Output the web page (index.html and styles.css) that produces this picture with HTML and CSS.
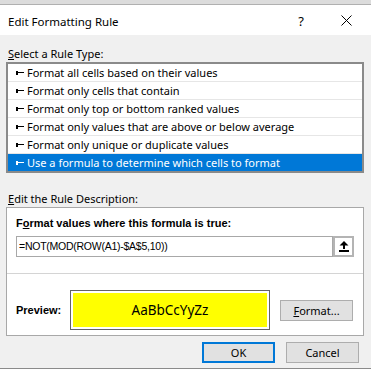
FILE: index.html
```html
<!DOCTYPE html>
<html lang="en">
<head>
  <meta charset="utf-8" />
  <title>Edit Formatting Rule</title>
  <link rel="stylesheet" href="styles.css">
</head>
<body>
  <div class="window">
    <div class="topstrip"></div>

    <div class="titlebar">
      <span class="title">Edit Formatting Rule</span>
      <span class="help">?</span>
      <svg class="close" width="11" height="11" viewBox="0 0 11 11">
        <path d="M0.5 0.5 L10.5 10.5 M10.5 0.5 L0.5 10.5" stroke="#000" stroke-width="1" fill="none"/>
      </svg>
    </div>

    <div class="dialog">
      <div class="label"><u>S</u>elect a Rule Type:</div>

      <div class="listbox">
        <div class="row"><span class="mark"></span>Format all cells based on their values</div>
        <div class="row"><span class="mark"></span>Format only cells that contain</div>
        <div class="row"><span class="mark"></span>Format only top or bottom ranked values</div>
        <div class="row"><span class="mark"></span>Format only values that are above or below average</div>
        <div class="row"><span class="mark"></span>Format only unique or duplicate values</div>
        <div class="row selected"><span class="mark"></span>Use a formula to determine which cells to format</div>
      </div>

      <div class="label second"><u>E</u>dit the Rule Description:</div>

      <div class="panel">
        <div class="formula-block">
          <div class="strong">F<u>o</u>rmat values where this formula is true:</div>
          <div class="formula-row">
            <div class="formula">=NOT(MOD(ROW(A1)-$A$5,10))</div>
            <div class="collapse">
              <svg width="10" height="11" viewBox="0 0 10 11">
                <path d="M5 0 L9.5 4.5 L6 4.5 L6 8 L4 8 L4 4.5 L0.5 4.5 Z" fill="#000"/>
                <rect x="0" y="9" width="10" height="2" fill="#000"/>
              </svg>
            </div>
          </div>
        </div>

        <div class="preview-row">
          <span class="strong">Preview:</span>
          <div class="preview"><div class="swatch">AaBbCcYyZz</div></div>
          <div class="btn format"><u>F</u>ormat...</div>
        </div>
      </div>

      <div class="buttons">
        <div class="btn ok">OK</div>
        <div class="btn">Cancel</div>
      </div>
    </div>

    <div class="sheet"></div>
  </div>
</body>
</html>
```

FILE: styles.css
```css
body {
  margin: 0;
  background: #f0f0f0;
  font-family: "Noto Sans", "Open Sans", sans-serif;
  font-size: 11px;
  color: #000;
}

.window {
  width: 371px;
  height: 372px;
  overflow: hidden;
  display: flex;
  flex-direction: column;
}

.topstrip {
  height: 4px;
  background: #dcdcdc;
  border-bottom: 1px solid #b0b0b0;
}

.titlebar {
  height: 30px;
  background: #fff;
  display: flex;
  align-items: center;
  padding: 2px 19px 0 8px;
  box-sizing: border-box;
}

.title {
  flex: 1;
  font-size: 11.5px;
}

.help {
  font-size: 13px;
  margin-right: 37px;
}

.close {
  margin-top: -1px;
}

.dialog {
  flex: 1;
  padding: 0 7px 0 6px;
}

.label {
  height: 16px;
  line-height: 16px;
  margin-top: 11px;
  padding-left: 2px;
}

.label.second {
  margin-top: 18px;
}

.listbox {
  background: #fff;
  border: 2px solid #8a8a8a;
}

.row {
  height: 17px;
  line-height: 17px;
  border-bottom: 1px solid #e6e6e6;
  display: flex;
  align-items: center;
  white-space: nowrap;
}

.row.selected {
  background: #0078d7;
  color: #fff;
  border-bottom: none;
}

.mark {
  width: 8px;
  height: 4px;
  margin: 0 3px 0 8px;
  background:
    linear-gradient(currentColor, currentColor) 0 0 / 2px 4px no-repeat,
    linear-gradient(currentColor, currentColor) 0 1px / 8px 1px no-repeat;
}

.panel {
  background: #fff;
  border: 1px solid #a8a8a8;
}

.formula-block {
  padding: 7px 9px 16px 9px;
  border-bottom: 1px solid #d4d4d4;
}

.strong {
  font-family: "Liberation Sans", Arial, sans-serif;
  font-weight: bold;
  font-size: 11px;
  line-height: 16px;
}

.formula-row {
  display: flex;
  margin-top: 5px;
}

.formula {
  flex: 1;
  height: 19px;
  line-height: 19px;
  border: 1px solid #a8a8a8;
  padding-left: 2px;
  font-family: "Liberation Sans", Arial, sans-serif;
  font-size: 10.5px;
  letter-spacing: -0.25px;
}

.collapse {
  width: 17px;
  height: 17px;
  border: 2px solid #b4b4b4;
  display: flex;
  align-items: center;
  justify-content: center;
}

.preview-row {
  display: flex;
  align-items: center;
  padding: 16px 10px 5px 9px;
}

.preview-row .strong {
  width: 54px;
}

.preview {
  width: 200px;
  height: 40px;
  border: 1px solid #646464;
  padding: 2px;
  box-sizing: border-box;
}

.swatch {
  height: 100%;
  background: #ffff00;
  display: flex;
  align-items: center;
  justify-content: center;
  font-size: 13.5px;
}

.btn {
  width: 73px;
  height: 21px;
  box-sizing: border-box;
  background: #e1e1e1;
  border: 1px solid #adadad;
  display: flex;
  align-items: center;
  justify-content: center;
}

.btn.format {
  margin-left: 10px;
}

.buttons {
  display: flex;
  justify-content: flex-end;
  gap: 11px;
  margin-top: 6px;
  padding-right: 5px;
}

.btn.ok {
  border: 2px solid #0078d7;
}

.sheet {
  height: 3px;
  border-top: 1px solid #8a8a8a;
  background: #fff;
}
```
